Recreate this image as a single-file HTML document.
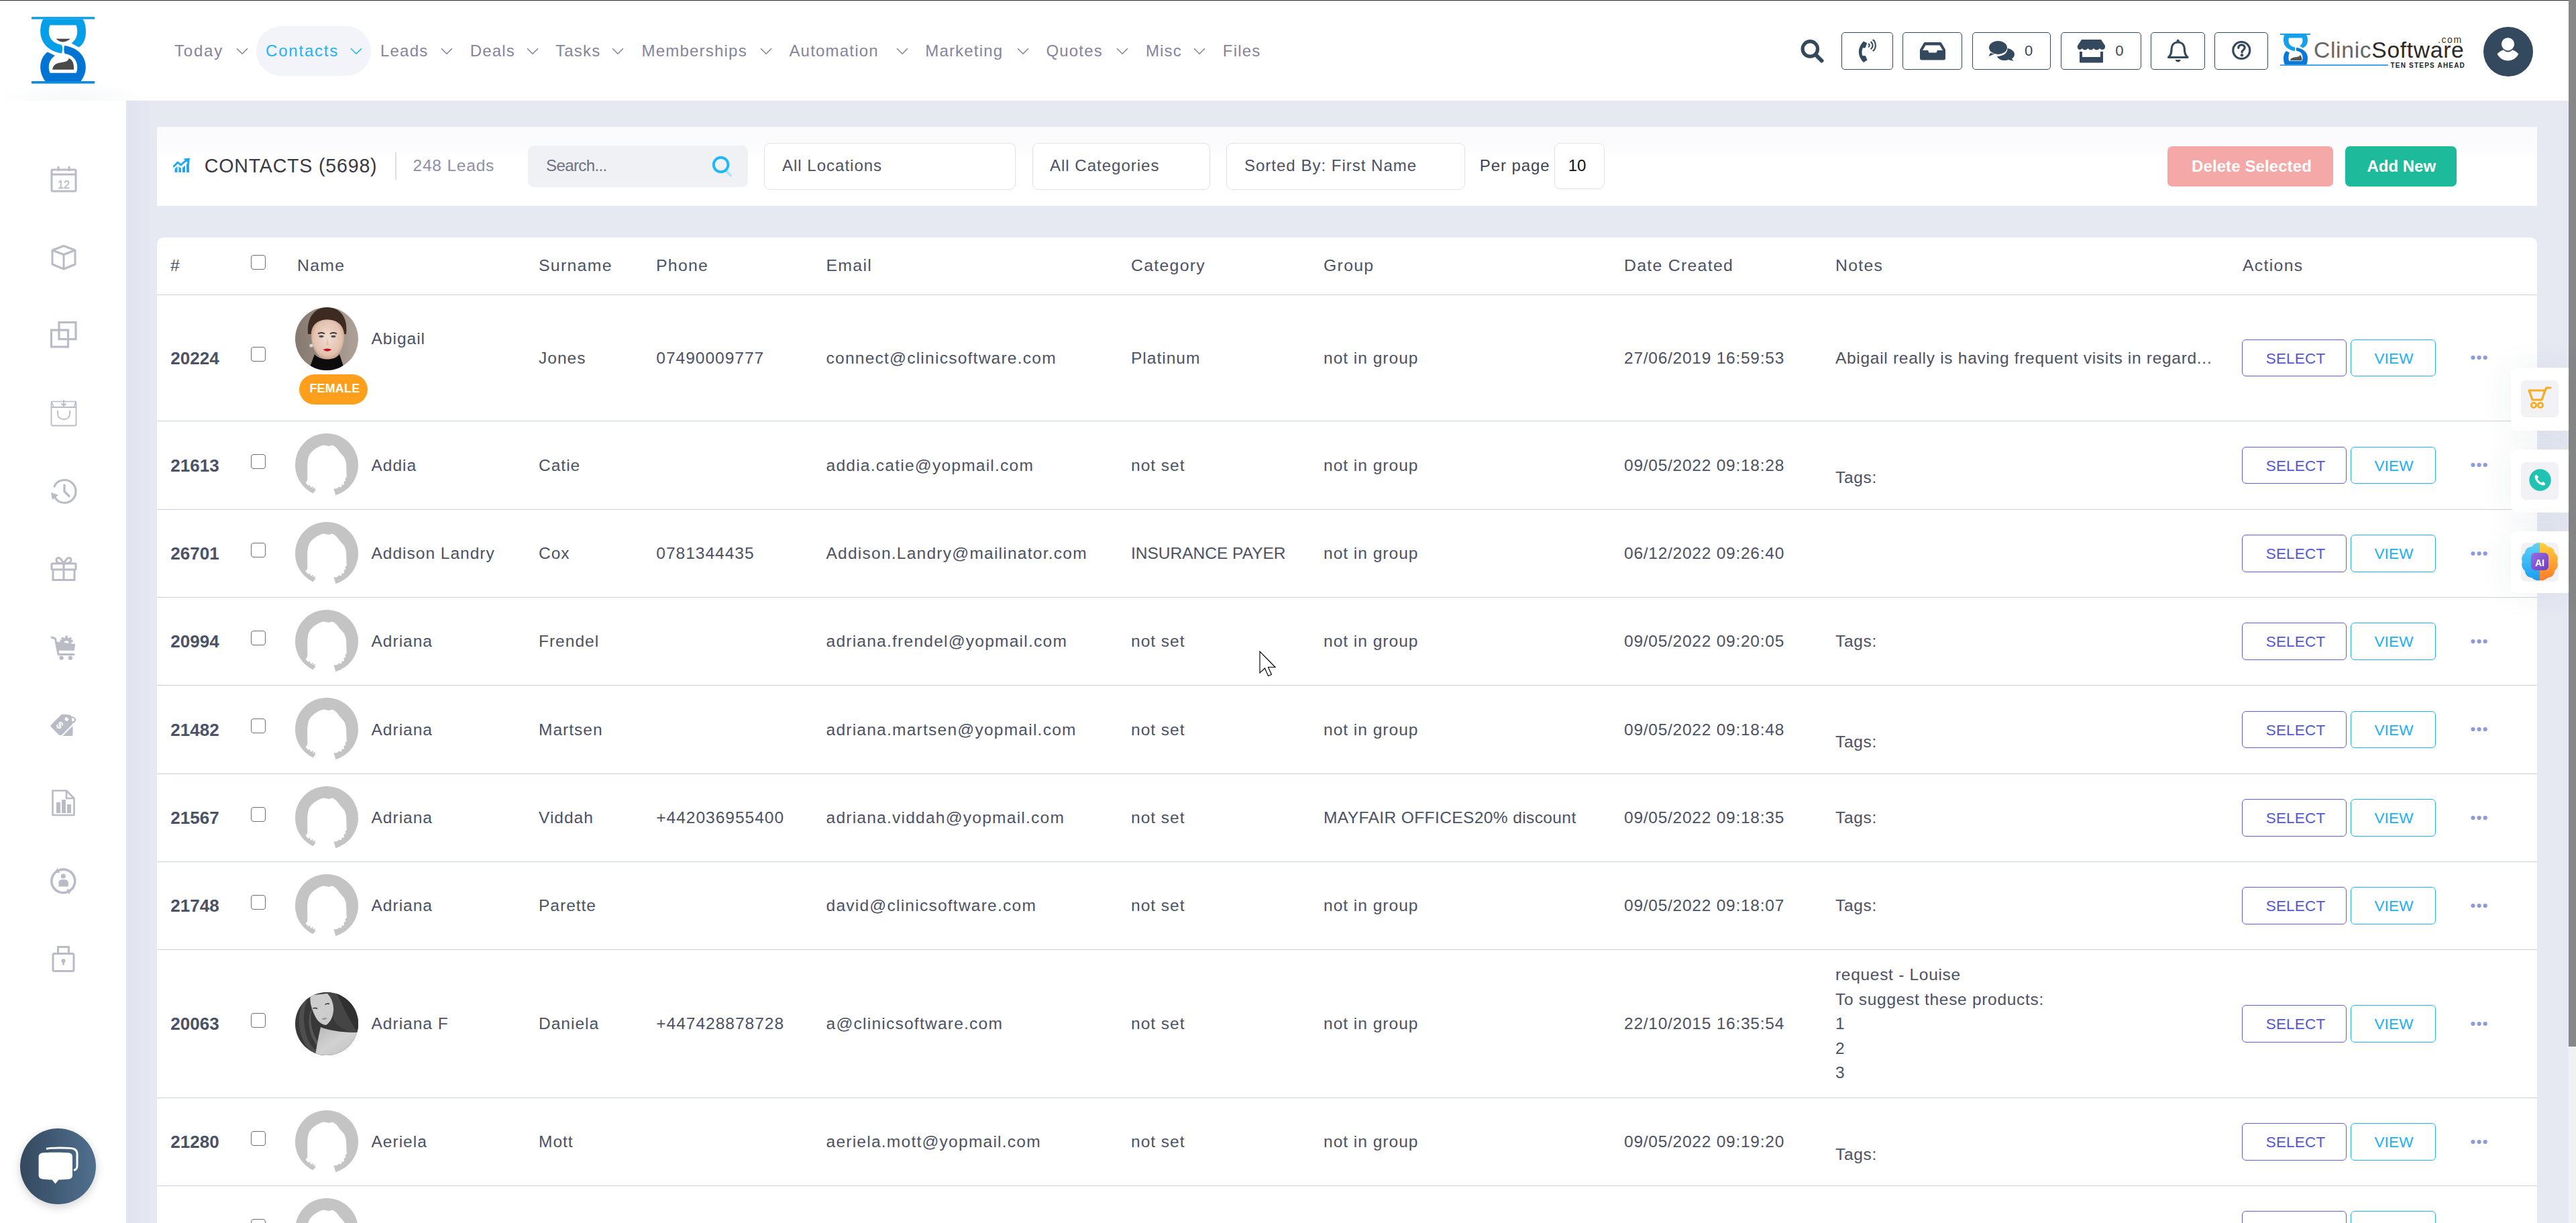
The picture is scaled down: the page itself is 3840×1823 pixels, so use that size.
<!DOCTYPE html><html><head><meta charset="utf-8"><title>Contacts</title><style>
html,body{margin:0;padding:0;width:3840px;height:1823px;overflow:hidden;} body{background:#fff;font-family:"Liberation Sans", sans-serif;} #root{position:relative;width:3840px;height:1823px;overflow:hidden;background:#fff;}
.t{position:absolute;line-height:1;white-space:nowrap;}
</style></head><body><div id="root">
<div style="position:absolute;left:188px;top:150px;width:3641px;height:1673px;background:#e6e9f2"></div>
<div style="position:absolute;left:188px;top:150px;width:40px;height:1673px;background:linear-gradient(90deg, rgba(200,204,220,0.18), rgba(200,204,220,0))"></div>
<div style="position:absolute;left:0px;top:118px;width:260px;height:32px;background:radial-gradient(ellipse 115px 32px at 110px 34px, rgba(238,240,244,0.55), rgba(255,255,255,0) 100%)"></div>
<div style="position:absolute;left:0px;top:0px;width:3829px;height:1px;background:#262a33"></div>
<svg style="position:absolute;left:40px;top:20px;" width="110" height="110" viewBox="0 0 110 110">
<rect x="7" y="5.2" width="94" height="3.4" fill="#079fe8"/>
<rect x="7" y="101" width="94" height="3.6" fill="#0b8ae0"/>
<path d="M24.5,8.5 L83.5,8.5 C86.5,13 88,20 88,27 C88,38 84.5,46 77.5,50.5 L66.5,44.5 C72.5,40 75.2,34 75.2,27 C75.2,23 74.5,20 73.5,17.5 L34.5,17.5 C33.5,20 32.8,23 32.8,27 C32.8,38 40,45 52,47 C53.5,51 53.5,55 52,59.5 C33,57 20.2,44 20.2,27 C20.2,20 21.5,13 24.5,8.5 Z" fill="#049fe8"/>
<path d="M56,48 C75,50.5 87.8,63 87.8,80 C87.8,88 85,95 80.5,101 L27.5,101 C23,95 20.2,88 20.2,80 C20.2,70 24.5,62 31,57.5 L42,63 C36,67 32.8,73 32.8,80 C32.8,84 33.6,86.5 34.6,88.7 L73.6,88.7 C74.6,86.5 75.2,84 75.2,80 C75.2,69 68,61.5 56.5,60 C55,56 55,52 56,48 Z" fill="#0074d2"/>
<path d="M43.6,37.8 L64.8,37.8 C61,41.5 56,42.5 54,42.5 C51,42.5 47,41.5 43.6,37.8 Z" fill="#4a4a4a"/>
<path d="M38.2,83.7 C39,76 45,74 52,73 C60,72 62,70 62.5,67 C68,68.5 70.2,74 70.2,83.7 Z" fill="#4a4a4a"/>
</svg>
<div style="position:absolute;left:382px;top:39px;width:171px;height:74px;background:#f3f4fa;border-radius:37px"></div>
<div class="t" style="left:260.0px;top:63.5px;font-size:24px;color:#85849f;font-weight:400;letter-spacing:1.8px;">Today</div>
<svg style="position:absolute;left:352.2px;top:71px;" width="18" height="11" viewBox="0 0 18 11"><path d="M1,1.2 L9,9.2 L17,1.2" fill="none" stroke="#85849f" stroke-width="1.6"/></svg>
<div class="t" style="left:396.0px;top:63.5px;font-size:24px;color:#1eb2fb;font-weight:400;letter-spacing:1.8px;">Contacts</div>
<svg style="position:absolute;left:522px;top:71px;" width="18" height="11" viewBox="0 0 18 11"><path d="M1,1.2 L9,9.2 L17,1.2" fill="none" stroke="#1eb2fb" stroke-width="1.6"/></svg>
<div class="t" style="left:567.0px;top:63.5px;font-size:24px;color:#85849f;font-weight:400;letter-spacing:1.2px;">Leads</div>
<svg style="position:absolute;left:656.7px;top:71px;" width="18" height="11" viewBox="0 0 18 11"><path d="M1,1.2 L9,9.2 L17,1.2" fill="none" stroke="#85849f" stroke-width="1.6"/></svg>
<div class="t" style="left:700.7px;top:63.5px;font-size:24px;color:#85849f;font-weight:400;letter-spacing:1.2px;">Deals</div>
<svg style="position:absolute;left:784.6px;top:71px;" width="18" height="11" viewBox="0 0 18 11"><path d="M1,1.2 L9,9.2 L17,1.2" fill="none" stroke="#85849f" stroke-width="1.6"/></svg>
<div class="t" style="left:828.0px;top:63.5px;font-size:24px;color:#85849f;font-weight:400;letter-spacing:1.2px;">Tasks</div>
<svg style="position:absolute;left:912px;top:71px;" width="18" height="11" viewBox="0 0 18 11"><path d="M1,1.2 L9,9.2 L17,1.2" fill="none" stroke="#85849f" stroke-width="1.6"/></svg>
<div class="t" style="left:956.6px;top:63.5px;font-size:24px;color:#85849f;font-weight:400;letter-spacing:1.2px;">Memberships</div>
<svg style="position:absolute;left:1132.9px;top:71px;" width="18" height="11" viewBox="0 0 18 11"><path d="M1,1.2 L9,9.2 L17,1.2" fill="none" stroke="#85849f" stroke-width="1.6"/></svg>
<div class="t" style="left:1176.4px;top:63.5px;font-size:24px;color:#85849f;font-weight:400;letter-spacing:1.2px;">Automation</div>
<svg style="position:absolute;left:1335.6px;top:71px;" width="18" height="11" viewBox="0 0 18 11"><path d="M1,1.2 L9,9.2 L17,1.2" fill="none" stroke="#85849f" stroke-width="1.6"/></svg>
<div class="t" style="left:1379.2px;top:63.5px;font-size:24px;color:#85849f;font-weight:400;letter-spacing:1.2px;">Marketing</div>
<svg style="position:absolute;left:1515.8px;top:71px;" width="18" height="11" viewBox="0 0 18 11"><path d="M1,1.2 L9,9.2 L17,1.2" fill="none" stroke="#85849f" stroke-width="1.6"/></svg>
<div class="t" style="left:1559.4px;top:63.5px;font-size:24px;color:#85849f;font-weight:400;letter-spacing:1.2px;">Quotes</div>
<svg style="position:absolute;left:1663.6px;top:71px;" width="18" height="11" viewBox="0 0 18 11"><path d="M1,1.2 L9,9.2 L17,1.2" fill="none" stroke="#85849f" stroke-width="1.6"/></svg>
<div class="t" style="left:1707.9px;top:63.5px;font-size:24px;color:#85849f;font-weight:400;letter-spacing:1.2px;">Misc</div>
<svg style="position:absolute;left:1779.2px;top:71px;" width="18" height="11" viewBox="0 0 18 11"><path d="M1,1.2 L9,9.2 L17,1.2" fill="none" stroke="#85849f" stroke-width="1.6"/></svg>
<div class="t" style="left:1822.8px;top:63.5px;font-size:24px;color:#85849f;font-weight:400;letter-spacing:1.2px;">Files</div>
<svg style="position:absolute;left:2682px;top:56px;" width="40" height="40" viewBox="0 0 40 40"><circle cx="16.3" cy="16.9" r="11.2" fill="none" stroke="#34495e" stroke-width="5.2"/><path d="M25,26 L33.5,34.5" stroke="#34495e" stroke-width="6" stroke-linecap="round"/></svg>
<div style="position:absolute;left:2745.3px;top:48px;width:76.4px;height:55.5px;box-sizing:border-box;border:1.6px solid #34495e;border-radius:5px"></div>
<div style="position:absolute;left:2836px;top:48px;width:88.7px;height:55.5px;box-sizing:border-box;border:1.6px solid #34495e;border-radius:5px"></div>
<div style="position:absolute;left:2940px;top:48px;width:116.6px;height:55.5px;box-sizing:border-box;border:1.6px solid #34495e;border-radius:5px"></div>
<div style="position:absolute;left:3072px;top:48px;width:119.6px;height:55.5px;box-sizing:border-box;border:1.6px solid #34495e;border-radius:5px"></div>
<div style="position:absolute;left:3206px;top:48px;width:80.6px;height:55.5px;box-sizing:border-box;border:1.6px solid #34495e;border-radius:5px"></div>
<div style="position:absolute;left:3301.3px;top:48px;width:79.4px;height:55.5px;box-sizing:border-box;border:1.6px solid #34495e;border-radius:5px"></div>
<svg style="position:absolute;left:2768px;top:58px;" width="32" height="36" viewBox="0 0 32 36"><path d="M10.1,3.5 L15.2,6.3 L12.6,13.5 L8.9,13.2 C7.2,17 7,21 8.3,24.9 L12.9,25.2 L15.5,31.5 L10.1,35 C5,30 2.9,24.5 2.9,19.2 C2.9,13.5 5.5,8 10.1,3.5 Z" fill="#34495e"/>
<path d="M17.6,7.6 C19.2,8.8 19.2,10.6 17.6,11.6" fill="none" stroke="#34495e" stroke-width="2.1" stroke-linecap="round"/>
<path d="M21.2,4.6 C24.4,7.2 24.4,12.4 21.2,14.6" fill="none" stroke="#34495e" stroke-width="2.1" stroke-linecap="round"/>
<path d="M24.4,1.6 C28.9,5.2 28.9,14.2 24.4,17.6" fill="none" stroke="#34495e" stroke-width="2.1" stroke-linecap="round"/></svg>
<svg style="position:absolute;left:2861px;top:62px;" width="40" height="28" viewBox="0 0 40 28"><path d="M9,1 L31,1 C32,1 33,1.5 33.5,2.5 L39,12 L39,25 C39,26.5 38,27.5 36.5,27.5 L3.5,27.5 C2,27.5 1,26.5 1,25 L1,12 L6.5,2.5 C7,1.5 8,1 9,1 Z M9.5,5.5 L5,13 L13,13 L14.5,16.5 L25.5,16.5 L27,13 L35,13 L30.5,5.5 Z" fill="#34495e" fill-rule="evenodd"/></svg>
<svg style="position:absolute;left:2964px;top:60px;" width="42" height="32" viewBox="0 0 42 32"><ellipse cx="14.5" cy="11" rx="13.5" ry="10" fill="#34495e"/><path d="M3,19 L0.5,24 L9,20.5 Z" fill="#34495e"/><path d="M28.5,12 C35,13 39,17 39,21 C39,23.5 37.5,26 35,27.5 L37.5,31 L30,29 C28,29.8 26,30 24,30 C19,30 15,28 13,24 C22,24 29,19 28.5,12 Z" fill="#34495e"/></svg>
<div class="t" style="left:3018.0px;top:64.9px;font-size:22px;color:#34495e;font-weight:400;letter-spacing:0px;">0</div>
<svg style="position:absolute;left:3096px;top:58px;" width="44" height="36" viewBox="0 0 44 36"><path d="M7,1 L36,1 L42,10 C42.5,13 41,16 38,16 C36,16 34.5,15 34,14 C33,15.5 31.5,16.5 29.5,16.5 C27.5,16.5 26,15.5 25,14 C24,15.5 22.5,16.5 21,16.5 C19,16.5 17.5,15.5 16.5,14 C15.5,15.5 14,16.5 12,16.5 C10,16.5 8.5,15.5 8,14 C7,15.5 5.5,16 4,16 C1.5,16 0.5,13 1,10 Z" fill="#34495e"/><path d="M4,19 L8,19 L8,27 L35,27 L35,19 L39,19 L39,34.5 C39,35 38.5,35.5 38,35.5 L5,35.5 C4.5,35.5 4,35 4,34.5 Z" fill="#34495e"/></svg>
<div class="t" style="left:3153.3px;top:64.9px;font-size:22px;color:#34495e;font-weight:400;letter-spacing:0px;">0</div>
<svg style="position:absolute;left:3230px;top:58px;" width="34" height="36" viewBox="0 0 34 36"><circle cx="16.7" cy="3" r="2.2" fill="#34495e"/><path d="M16.7,5 C10,5 7,10 7,16 C7,22 5.5,25 2.5,27.5 L31,27.5 C28,25 26.5,22 26.5,16 C26.5,10 23.5,5 16.7,5 Z" fill="none" stroke="#34495e" stroke-width="3.2" stroke-linejoin="round"/><path d="M12.5,31 L21,31 C20,33.5 18.5,34.5 16.7,34.5 C15,34.5 13.5,33.5 12.5,31 Z" fill="#34495e"/></svg>
<svg style="position:absolute;left:3326px;top:60px;" width="32" height="32" viewBox="0 0 32 32"><circle cx="15.3" cy="15" r="12.5" fill="none" stroke="#34495e" stroke-width="3.2"/><path d="M10.8,11.5 C10.8,8.5 13,6.8 15.5,6.8 C18.2,6.8 20.2,8.5 20.2,11 C20.2,14.5 16,14.5 16,18" fill="none" stroke="#34495e" stroke-width="3.2" stroke-linecap="round"/><circle cx="16" cy="22.3" r="2.2" fill="#34495e"/></svg>
<svg style="position:absolute;left:3399px;top:50px;" width="165" height="50" viewBox="0 0 165 50">
<rect x="0" y="0" width="45" height="2" fill="#1aa0ea"/>
<path d="M6,2 L39,2 C40.5,4 41,7 41,10 C41,16 38,19.5 34,21.5 L29,18.5 C32,17 33.5,14 33.5,10 C33.5,8.5 33.2,7.5 32.8,6.5 L13.2,6.5 C12.8,7.5 12.5,8.5 12.5,10 C12.5,16 16,19.5 22,20.5 C22.5,22.5 22.5,24 22,26 C12,25 5,19 5,10 C5,7 5.5,4 6,2 Z" fill="#14a1ea"/>
<path d="M24,21 C34,22 41,28 41,36 C41,40 40.5,44 39,46.5 L7,46.5 C5.5,44 5,40 5,36 C5,32 6.5,28.5 9,26 L14,28.5 C13,30 12.5,33 12.5,36 C12.5,38 12.8,39.5 13.2,40.8 L32.8,40.8 C33.2,39.5 33.5,38 33.5,36 C33.5,30 30,26.5 24.5,26 C23.8,24.5 23.8,22.5 24,21 Z" fill="#0a78d6"/>
<path d="M15,40 C15.5,36.5 19,35.5 24,35 C28,34.5 29,33.5 29.5,32 C31.5,33 32.5,36 32.5,40 Z" fill="#555"/>
<rect x="0" y="46.2" width="161" height="1.8" fill="#2e9be6"/>
</svg>
<div class="t" style="left:3448.5px;top:57.8px;font-size:33px;letter-spacing:0.65px;color:#666;font-weight:400;transform:scaleX(1.02);transform-origin:left">Clinic<span style="color:#2a2a2a">Software</span></div>
<div class="t" style="left:3634.0px;top:51.5px;font-size:14px;color:#333;font-weight:400;letter-spacing:1.6px;">.com</div>
<div class="t" style="left:3563.5px;top:92.7px;font-size:10px;color:#222;font-weight:700;letter-spacing:1.2px;">TEN STEPS AHEAD</div>
<svg style="position:absolute;left:3702px;top:39.5px;" width="74" height="74" viewBox="0 0 74 74"><circle cx="37" cy="37" r="37" fill="#34495e"/><circle cx="36.5" cy="25.8" r="9.6" fill="#fff"/><path d="M20.6,40.5 C24,36.5 29,34.5 30,34.5 C32,36.5 34,37.5 36.5,37.5 C39,37.5 41,36.5 43,34.5 C44,34.5 49,36.5 52.3,40.5 C49,47 43,50.5 36.5,50.5 C30,50.5 24,47 20.6,40.5 Z" fill="#fff"/></svg>
<div style="position:absolute;left:3829px;top:0px;width:11px;height:1823px;background:#f1f1f1"></div>
<div style="position:absolute;left:3829px;top:0px;width:11px;height:1560px;background:#878787"></div>
<svg style="position:absolute;left:75px;top:247px;overflow:visible" width="40" height="40" viewBox="0 0 40 40"><rect x="2" y="6" width="36" height="32" rx="1.5" fill="none" stroke="#b9bcc6" stroke-width="3"/><path d="M2,13 L38,13" stroke="#b9bcc6" stroke-width="3"/><path d="M12,1 L12,8 M28,1 L28,8" stroke="#b9bcc6" stroke-width="3"/><text x="20" y="33.5" font-family="Liberation Sans" font-size="16" fill="#b9bcc6" text-anchor="middle" font-weight="400" stroke="#b9bcc6" stroke-width="0.4">12</text></svg>
<svg style="position:absolute;left:75px;top:363.5px;overflow:visible" width="40" height="40" viewBox="0 0 40 40"><path d="M20,2.5 L37,9 L37,30 L20,37 L3,30 L3,9 Z M3,9 L20,15.5 L37,9 M20,15.5 L20,37" fill="none" stroke="#b9bcc6" stroke-width="3" stroke-linejoin="round"/></svg>
<svg style="position:absolute;left:75px;top:479px;overflow:visible" width="40" height="40" viewBox="0 0 40 40"><rect x="13" y="1.5" width="25" height="25" fill="none" stroke="#b9bcc6" stroke-width="3.2"/><rect x="1.5" y="13" width="25" height="25" fill="none" stroke="#b9bcc6" stroke-width="3.2"/></svg>
<svg style="position:absolute;left:75px;top:596px;overflow:visible" width="40" height="40" viewBox="0 0 40 40"><path d="M1.5,11 L38.5,11 L38.5,36.5 C38.5,37.5 37.5,38.5 36.5,38.5 L3.5,38.5 C2.5,38.5 1.5,37.5 1.5,36.5 Z" fill="none" stroke="#b9bcc6" stroke-width="1.8"/><path d="M1.5,2.5 L38.5,2.5 M1.5,2.5 L1.5,11 M38.5,2.5 L38.5,11 M2,3 L5,11 M38,3 L35,11" fill="none" stroke="#b9bcc6" stroke-width="1.6"/><path d="M20,0 L20,9 M16.5,5.5 L20,9 L23.5,5.5" fill="none" stroke="#b9bcc6" stroke-width="1.8"/><path d="M11,16 L11,21 C11,26 15,29 20,29 C25,29 29,26 29,21 L29,16" fill="none" stroke="#b9bcc6" stroke-width="1.8"/></svg>
<svg style="position:absolute;left:75px;top:712px;overflow:visible" width="40" height="40" viewBox="0 0 40 40"><path d="M6,27 C8.5,33.5 14,37.5 21,37.5 C30.5,37.5 38,30 38,20.5 C38,11 30.5,3.5 21,3.5 C14,3.5 8.5,7.5 6,13" fill="none" stroke="#b9bcc6" stroke-width="3.2" stroke-linecap="round"/><path d="M1,22 L12,26 L3,33 Z" fill="#b9bcc6"/><path d="M21,11 L21,20.5 L28,27.5" fill="none" stroke="#b9bcc6" stroke-width="3.2" stroke-linecap="round"/></svg>
<svg style="position:absolute;left:75px;top:828px;overflow:visible" width="40" height="40" viewBox="0 0 40 40"><rect x="2" y="12" width="36" height="9" rx="1" fill="none" stroke="#b9bcc6" stroke-width="3"/><path d="M4,21 L4,36.5 L36,36.5 L36,21 M20,12 L20,36.5" fill="none" stroke="#b9bcc6" stroke-width="3"/><path d="M20,12 C17,6 14,3 11.5,3.5 C8.5,4 8.5,8 10,9.5 C11,10.5 14,12 20,12 C26,12 29,10.5 30,9.5 C31.5,8 31.5,4 28.5,3.5 C26,3 23,6 20,12 Z" fill="none" stroke="#b9bcc6" stroke-width="3"/></svg>
<svg style="position:absolute;left:75px;top:944px;overflow:visible" width="40" height="40" viewBox="0 0 40 40"><path d="M24,13.5 L24,3.5 M24,13.5 L17,6.5 M24,13.5 L31,6.5 M24,13.5 L14.5,11 M24,13.5 L33.5,11" stroke="#b9bcc6" stroke-width="3.4"/><circle cx="24" cy="13.5" r="7.2" fill="#b9bcc6"/><circle cx="24" cy="14.5" r="3.6" fill="#fff"/><path d="M2,6 L7.5,8 L12,31.5 L35,31.5" fill="none" stroke="#b9bcc6" stroke-width="3" stroke-linecap="round" stroke-linejoin="round"/><path d="M9.3,12.5 L37.2,16.1 L35.7,25.7 L11.5,25.7 Z" fill="#b9bcc6"/><circle cx="16.6" cy="36.7" r="3.1" fill="#b9bcc6"/><circle cx="29.9" cy="36.7" r="3.1" fill="#b9bcc6"/></svg>
<svg style="position:absolute;left:75px;top:1061px;overflow:visible" width="40" height="40" viewBox="0 0 40 40"><path d="M1,19.5 L15.5,5 C16.5,4 17.5,3.8 19,3.8 L28,4.5 C30,4.7 31,5.5 31.5,7.5 L33,16 C33.3,17.5 33,18.5 32,19.5 L17,34.5 C15.8,35.6 14.2,35.6 13,34.5 L1,22.5 C0.2,21.7 0.2,20.3 1,19.5 Z" fill="#b9bcc6"/><path d="M18.5,36 L33.5,21 L33.5,34 C33.5,35.2 32.7,36 31.5,36 Z" fill="#b9bcc6"/><circle cx="24.5" cy="10.8" r="2.9" fill="#fff"/><path d="M25.5,9.5 C30.5,6 38.5,8.5 36.8,13.2 C35.8,16.2 31,16.8 27.5,14.8" fill="none" stroke="#b9bcc6" stroke-width="2.2"/><text x="14" y="26" font-family="Liberation Sans" font-size="15" fill="#fff" font-weight="700" text-anchor="middle" transform="rotate(45 15 20.5)">$</text></svg>
<svg style="position:absolute;left:75px;top:1177px;overflow:visible" width="40" height="40" viewBox="0 0 40 40"><path d="M3.5,1.5 L24,1.5 L35.5,13 L35.5,38 L3.5,38 Z" fill="none" stroke="#b9bcc6" stroke-width="2.6" stroke-linejoin="round"/><path d="M24,1.5 L24,13 L35.5,13" fill="none" stroke="#b9bcc6" stroke-width="2.6"/><rect x="9" y="19" width="6" height="16" fill="#b9bcc6"/><rect x="17" y="15" width="6" height="20" fill="#b9bcc6"/><rect x="25" y="22" width="6" height="13" fill="#b9bcc6"/></svg>
<svg style="position:absolute;left:75px;top:1293px;overflow:visible" width="40" height="40" viewBox="0 0 40 40"><path d="M29.2,34.5 A17.3,17.3 0 0 0 12,4.6" fill="none" stroke="#b9bcc6" stroke-width="3.6"/><path d="M9.4,6.1 A17.3,17.3 0 0 0 26.6,36" fill="none" stroke="#b9bcc6" stroke-width="3.6"/><path d="M6.8,7.2 L10.6,0.4 L14.2,8.6 Z M31.8,33.4 L28,40.2 L24.4,32 Z" fill="#b9bcc6"/><circle cx="19.3" cy="13" r="3.6" fill="#b9bcc6"/><path d="M12.4,28.5 L12.4,22 C12.4,19.5 14.5,17.9 19.3,17.9 C24.1,17.9 26.8,19.5 26.8,22 L26.8,28.5 Z" fill="#b9bcc6"/></svg>
<svg style="position:absolute;left:75px;top:1410px;overflow:visible" width="40" height="40" viewBox="0 0 40 40"><rect x="4" y="11.5" width="31" height="26" rx="2" fill="none" stroke="#b9bcc6" stroke-width="3"/><path d="M11.5,11.5 L11.5,1.5 L27.5,1.5 L27.5,11.5" fill="none" stroke="#b9bcc6" stroke-width="3"/><circle cx="19.5" cy="22.3" r="3" fill="#b9bcc6"/><rect x="18.2" y="23" width="2.6" height="5.5" fill="#b9bcc6"/></svg>
<div style="position:absolute;left:30px;top:1681.5px;width:113px;height:113px;border-radius:50%;background:linear-gradient(90deg,#34495e,#50708f);box-shadow:0 4px 14px rgba(0,0,0,0.18)"></div>
<svg style="position:absolute;left:50px;top:1700px;" width="70" height="70" viewBox="0 0 70 70"><path d="M19,12.5 C24,10.5 56,10.5 60,12.5 C63.5,14 65,16 65,20 L65,38 C65,41.5 63.5,43.5 60,44.5" fill="none" stroke="#fff" stroke-width="3"/><path d="M7.6,25 C7.6,21 9.5,19 13,18.5 C20,17.5 46,17.5 53,18.5 C56.5,19 58,21 58,25 L58,51 C58,55 56.5,57 53,57.5 C47,58.3 41,58.5 37.5,58.5 L32.5,64.6 L27.5,58.5 C24,58.5 18,58.3 13,57.5 C9.5,57 7.6,55 7.6,51 Z" fill="#fff"/></svg>
<div style="position:absolute;left:234px;top:189px;width:3548px;height:118px;background:linear-gradient(#fafafc 0,#fcfcfd 40px,#fff 41px)"></div>
<svg style="position:absolute;left:258px;top:235px;" width="26" height="23" viewBox="0 0 26 23"><path d="M1,13 L7,7 L11.5,11 L20,3.5" fill="none" stroke="#1fa8f0" stroke-width="3" stroke-linejoin="round" stroke-linecap="round"/><path d="M15.5,1.5 L25,0.5 L24,10 Z" fill="#1fa8f0"/><path d="M2.5,16.5 L6.5,13 L6.5,22 L2.5,22 Z M8.5,13 L12,16 L12,22 L8.5,22 Z M14,15 L18,11.5 L18,22 L14,22 Z M20,9.5 L24,6 L24,22 L20,22 Z" fill="#1fa8f0"/></svg>
<div class="t" style="left:304.7px;top:232.8px;font-size:28.6px;color:#393a46;font-weight:400;letter-spacing:0.8px;">CONTACTS (5698)</div>
<div style="position:absolute;left:589px;top:227px;width:2px;height:41px;background:#dcdfe8"></div>
<div class="t" style="left:615.5px;top:235.0px;font-size:24.5px;color:#8d90ab;font-weight:400;letter-spacing:0.8px;">248 Leads</div>
<div style="position:absolute;left:787px;top:217px;width:328px;height:62px;background:#eff1f5;border-radius:9px"></div>
<div class="t" style="left:814.0px;top:235.4px;font-size:24px;color:#6d7083;font-weight:400;letter-spacing:-0.6px;">Search...</div>
<svg style="position:absolute;left:1059px;top:232px;" width="34" height="34" viewBox="0 0 34 34"><path d="M22.5,21.5 L30,29.5" stroke="#b3e3f8" stroke-width="3.9" stroke-linecap="round"/><circle cx="15.6" cy="13.5" r="10.8" fill="none" stroke="#1fb8fd" stroke-width="3.9"/></svg>
<div style="position:absolute;left:1139px;top:213px;width:375px;height:69.5px;box-sizing:border-box;border:1.5px solid #dfe2ea;border-radius:9px;background:#fff"></div>
<div class="t" style="left:1166.0px;top:234.7px;font-size:24px;color:#4b5166;font-weight:400;letter-spacing:1.0px;">All Locations</div>
<div style="position:absolute;left:1539px;top:213px;width:265px;height:69.5px;box-sizing:border-box;border:1.5px solid #dfe2ea;border-radius:9px;background:#fff"></div>
<div class="t" style="left:1565.0px;top:234.7px;font-size:24px;color:#4b5166;font-weight:400;letter-spacing:1.0px;">All Categories</div>
<div style="position:absolute;left:1828px;top:213px;width:356px;height:69.5px;box-sizing:border-box;border:1.5px solid #dfe2ea;border-radius:9px;background:#fff"></div>
<div class="t" style="left:1855.0px;top:234.7px;font-size:24px;color:#4b5166;font-weight:400;letter-spacing:1.0px;">Sorted By: First Name</div>
<div class="t" style="left:2205.8px;top:234.7px;font-size:24px;color:#3f4257;font-weight:400;letter-spacing:0.9px;">Per page</div>
<div style="position:absolute;left:2317px;top:213px;width:75px;height:68.5px;box-sizing:border-box;border:1.5px solid #dfe2ea;border-radius:9px;background:#fff"></div>
<div class="t" style="left:2337.7px;top:234.7px;font-size:24px;color:#111;font-weight:400;letter-spacing:0px;">10</div>
<div style="position:absolute;left:3231px;top:218px;width:247px;height:60px;background:#f4a8a8;border-radius:7px"></div>
<div class="t" style="left:3267.0px;top:235.5px;font-size:24px;color:#fff;font-weight:700;letter-spacing:0.1px;">Delete Selected</div>
<div style="position:absolute;left:3496px;top:218px;width:166px;height:60px;background:#1dbb9b;border-radius:7px"></div>
<div class="t" style="left:3528.4px;top:235.5px;font-size:24px;color:#fff;font-weight:700;letter-spacing:0px;">Add New</div>
<div style="position:absolute;left:234px;top:354px;width:3548px;height:1489px;background:#fff;border-radius:10px 10px 0 0"></div>
<div class="t" style="left:254.0px;top:383.8px;font-size:24.8px;color:#4b5166;font-weight:400;letter-spacing:1.3px;">#</div>
<div class="t" style="left:443.0px;top:383.8px;font-size:24.8px;color:#4b5166;font-weight:400;letter-spacing:1.3px;">Name</div>
<div class="t" style="left:803.0px;top:383.8px;font-size:24.8px;color:#4b5166;font-weight:400;letter-spacing:1.3px;">Surname</div>
<div class="t" style="left:978.0px;top:383.8px;font-size:24.8px;color:#4b5166;font-weight:400;letter-spacing:1.3px;">Phone</div>
<div class="t" style="left:1231.5px;top:383.8px;font-size:24.8px;color:#4b5166;font-weight:400;letter-spacing:1.3px;">Email</div>
<div class="t" style="left:1686.0px;top:383.8px;font-size:24.8px;color:#4b5166;font-weight:400;letter-spacing:1.3px;">Category</div>
<div class="t" style="left:1973.0px;top:383.8px;font-size:24.8px;color:#4b5166;font-weight:400;letter-spacing:1.3px;">Group</div>
<div class="t" style="left:2421.0px;top:383.8px;font-size:24.8px;color:#4b5166;font-weight:400;letter-spacing:1.3px;">Date Created</div>
<div class="t" style="left:2736.0px;top:383.8px;font-size:24.8px;color:#4b5166;font-weight:400;letter-spacing:1.3px;">Notes</div>
<div class="t" style="left:3343.0px;top:383.8px;font-size:24.8px;color:#4b5166;font-weight:400;letter-spacing:1.3px;">Actions</div>
<div style="position:absolute;left:374.2px;top:380px;width:22px;height:22px;box-sizing:border-box;border:1.7px solid #6f6f6f;border-radius:4px;background:#fff"></div>
<div style="position:absolute;left:234px;top:439px;width:3548px;height:1.3px;background:#cdd0de"></div>
<div style="position:absolute;left:234px;top:627px;width:3548px;height:1.3px;background:#cdd0de"></div>
<div style="position:absolute;left:234px;top:759px;width:3548px;height:1.3px;background:#cdd0de"></div>
<div style="position:absolute;left:234px;top:890px;width:3548px;height:1.3px;background:#cdd0de"></div>
<div style="position:absolute;left:234px;top:1021px;width:3548px;height:1.3px;background:#cdd0de"></div>
<div style="position:absolute;left:234px;top:1153px;width:3548px;height:1.3px;background:#cdd0de"></div>
<div style="position:absolute;left:234px;top:1284px;width:3548px;height:1.3px;background:#cdd0de"></div>
<div style="position:absolute;left:234px;top:1415px;width:3548px;height:1.3px;background:#cdd0de"></div>
<div style="position:absolute;left:234px;top:1636px;width:3548px;height:1.3px;background:#cdd0de"></div>
<div style="position:absolute;left:234px;top:1767px;width:3548px;height:1.3px;background:#cdd0de"></div>
<div class="t" style="left:254.3px;top:520.5px;font-size:26px;color:#4b5166;font-weight:700;letter-spacing:0px;">20224</div>
<div style="position:absolute;left:374.2px;top:517.0px;width:22px;height:22px;box-sizing:border-box;border:1.7px solid #6f6f6f;border-radius:4px;background:#fff"></div>
<div style="position:absolute;left:440px;top:458px;width:94px;height:94px"><svg width="94" height="94" viewBox="0 0 94 94"><defs><clipPath id="cpa"><circle cx="47" cy="47" r="47"/></clipPath>
<linearGradient id="bga" x1="0" x2="1"><stop offset="0" stop-color="#85786f"/><stop offset="1" stop-color="#ada198"/></linearGradient>
<radialGradient id="skin" cx="0.5" cy="0.45" r="0.6"><stop offset="0" stop-color="#f2ddd2"/><stop offset="0.7" stop-color="#e3c2b0"/><stop offset="1" stop-color="#b88c78"/></radialGradient></defs>
<g clip-path="url(#cpa)"><rect width="94" height="94" fill="url(#bga)"/>
<path d="M19,40 C17,14 30,0 48,0 C66,0 79,14 76,40 L73,40 C71,28 63,19 48,18.5 C33,19 26,28 24,40 Z" fill="#3d2b22"/>
<path d="M24,42 C23.5,27 33,18.5 48,18.5 C63,18.5 73,27 73,42 C73,62 64,77 49,79 C34,77 24.5,62 24,42 Z" fill="url(#skin)"/>
<path d="M34,39.5 Q39,36.5 44,39.5 M52,39.5 Q57,36.5 62,39.5" stroke="#3a2a2a" stroke-width="1.8" fill="none"/>
<ellipse cx="39" cy="43.5" rx="3.5" ry="1.7" fill="#4a5060"/><ellipse cx="57" cy="43.5" rx="3.5" ry="1.7" fill="#4a5060"/>
<path d="M48,44 L46,56 L50,57 Z" fill="#d9b5a2" opacity="0.6"/>
<path d="M41.5,63 Q48,60 54.5,63 Q48,68.5 41.5,63 Z" fill="#c8101a"/>
<circle cx="24" cy="57" r="2.6" fill="#d8d8d8"/>
<path d="M29,70 C36,80 60,80 66,70 L74,94 L20,94 Z" fill="#0d0b0b"/></g></svg></div>
<div class="t" style="left:553.5px;top:493.3px;font-size:24.5px;color:#4b5166;font-weight:400;letter-spacing:1.0px;">Abigail</div>
<div style="position:absolute;left:446px;top:558px;width:102px;height:45px;background:#ff9f1c;border-radius:23px"></div>
<div class="t" style="left:461.4px;top:571.1px;font-size:17.8px;color:#fff;font-weight:700;letter-spacing:0.3px;">FEMALE</div>
<div class="t" style="left:803.0px;top:521.8px;font-size:24.5px;color:#4b5166;font-weight:400;letter-spacing:1.0px;">Jones</div>
<div class="t" style="left:978.3px;top:521.8px;font-size:24.5px;color:#4b5166;font-weight:400;letter-spacing:1.0px;">07490009777</div>
<div class="t" style="left:1231.5px;top:521.8px;font-size:24.5px;color:#4b5166;font-weight:400;letter-spacing:1.25px;">connect@clinicsoftware.com</div>
<div class="t" style="left:1686.0px;top:521.8px;font-size:24.5px;color:#4b5166;font-weight:400;letter-spacing:1.0px;">Platinum</div>
<div class="t" style="left:1973.0px;top:521.8px;font-size:24.5px;color:#4b5166;font-weight:400;letter-spacing:1.0px;">not in group</div>
<div class="t" style="left:2421.0px;top:521.8px;font-size:24.5px;color:#4b5166;font-weight:400;letter-spacing:0.75px;">27/06/2019 16:59:53</div>
<div class="t" style="left:2736.0px;top:521.8px;font-size:24.5px;color:#4b5166;font-weight:400;letter-spacing:0.7px;">Abigail really is having frequent visits in regard...</div>
<div style="position:absolute;left:3342px;top:505.5px;width:155.5px;height:55.5px;box-sizing:border-box;border:1.6px solid #5c62d6;border-radius:6px"></div>
<div class="t" style="left:3377.7px;top:523.5px;font-size:22.5px;color:#5158d8;font-weight:400;letter-spacing:0.2px;">SELECT</div>
<div style="position:absolute;left:3504px;top:505.5px;width:126.5px;height:55.5px;box-sizing:border-box;border:1.6px solid #1fb5f5;border-radius:6px"></div>
<div class="t" style="left:3539.4px;top:523.5px;font-size:22.5px;color:#1ab0f5;font-weight:400;letter-spacing:0.2px;">VIEW</div>
<svg style="position:absolute;left:3682px;top:529.0px;" width="26" height="8" viewBox="0 0 26 8"><circle cx="4.5" cy="4" r="3.1" fill="#8f9ad8"/><circle cx="13.6" cy="4" r="3.1" fill="#8f9ad8"/><circle cx="22.7" cy="4" r="3.1" fill="#8f9ad8"/></svg>
<div class="t" style="left:254.3px;top:680.5px;font-size:26px;color:#4b5166;font-weight:700;letter-spacing:0px;">21613</div>
<div style="position:absolute;left:374.2px;top:677.0px;width:22px;height:22px;box-sizing:border-box;border:1.7px solid #6f6f6f;border-radius:4px;background:#fff"></div>
<div style="position:absolute;left:440px;top:646.0px;width:94px;height:94px"><svg width="94" height="94" viewBox="0 0 94 94"><circle cx="47" cy="47" r="47" fill="#c4c4c4"/>
<path d="M27,88.5 L31.5,83.5 L29,84.5 L30,80.5 L26.5,82.5 L26.5,78.5 L23,81 L22,76.5 L19.5,78 L15.5,73.5 L18.3,70 L18.3,62 C18.3,55 18,50 18.3,45 C19,38 20,34 21,32.5 C25,26 32,20 42.5,17.5 L50.8,19 L55,17.5 C60,19 64,24 66.6,28.3 C70,32 74,36 74.5,39 C76,43 76.2,46 76.2,49 L76.6,62 L77,65 L74.5,67 L75.5,70.5 L72.5,72 L73,76.5 L69.5,76.5 L69,80.5 L65,79.5 L63,82 L57.5,82.5 L60,90.5 L60,100 L27,100 Z" fill="#fff"/></svg></div>
<div class="t" style="left:553.5px;top:681.8px;font-size:24.5px;color:#4b5166;font-weight:400;letter-spacing:1.0px;">Addia</div>
<div class="t" style="left:803.0px;top:681.8px;font-size:24.5px;color:#4b5166;font-weight:400;letter-spacing:1.0px;">Catie</div>
<div class="t" style="left:978.3px;top:681.8px;font-size:24.5px;color:#4b5166;font-weight:400;letter-spacing:1.0px;"></div>
<div class="t" style="left:1231.5px;top:681.8px;font-size:24.5px;color:#4b5166;font-weight:400;letter-spacing:1.25px;">addia.catie@yopmail.com</div>
<div class="t" style="left:1686.0px;top:681.8px;font-size:24.5px;color:#4b5166;font-weight:400;letter-spacing:1.0px;">not set</div>
<div class="t" style="left:1973.0px;top:681.8px;font-size:24.5px;color:#4b5166;font-weight:400;letter-spacing:1.0px;">not in group</div>
<div class="t" style="left:2421.0px;top:681.8px;font-size:24.5px;color:#4b5166;font-weight:400;letter-spacing:0.75px;">09/05/2022 09:18:28</div>
<div class="t" style="left:2736.0px;top:700.0px;font-size:24.5px;color:#4b5166;font-weight:400;letter-spacing:0.7px;">Tags:</div>
<div style="position:absolute;left:3342px;top:665.5px;width:155.5px;height:55.5px;box-sizing:border-box;border:1.6px solid #5c62d6;border-radius:6px"></div>
<div class="t" style="left:3377.7px;top:683.5px;font-size:22.5px;color:#5158d8;font-weight:400;letter-spacing:0.2px;">SELECT</div>
<div style="position:absolute;left:3504px;top:665.5px;width:126.5px;height:55.5px;box-sizing:border-box;border:1.6px solid #1fb5f5;border-radius:6px"></div>
<div class="t" style="left:3539.4px;top:683.5px;font-size:22.5px;color:#1ab0f5;font-weight:400;letter-spacing:0.2px;">VIEW</div>
<svg style="position:absolute;left:3682px;top:689.0px;" width="26" height="8" viewBox="0 0 26 8"><circle cx="4.5" cy="4" r="3.1" fill="#8f9ad8"/><circle cx="13.6" cy="4" r="3.1" fill="#8f9ad8"/><circle cx="22.7" cy="4" r="3.1" fill="#8f9ad8"/></svg>
<div class="t" style="left:254.3px;top:812.0px;font-size:26px;color:#4b5166;font-weight:700;letter-spacing:0px;">26701</div>
<div style="position:absolute;left:374.2px;top:808.5px;width:22px;height:22px;box-sizing:border-box;border:1.7px solid #6f6f6f;border-radius:4px;background:#fff"></div>
<div style="position:absolute;left:440px;top:777.5px;width:94px;height:94px"><svg width="94" height="94" viewBox="0 0 94 94"><circle cx="47" cy="47" r="47" fill="#c4c4c4"/>
<path d="M27,88.5 L31.5,83.5 L29,84.5 L30,80.5 L26.5,82.5 L26.5,78.5 L23,81 L22,76.5 L19.5,78 L15.5,73.5 L18.3,70 L18.3,62 C18.3,55 18,50 18.3,45 C19,38 20,34 21,32.5 C25,26 32,20 42.5,17.5 L50.8,19 L55,17.5 C60,19 64,24 66.6,28.3 C70,32 74,36 74.5,39 C76,43 76.2,46 76.2,49 L76.6,62 L77,65 L74.5,67 L75.5,70.5 L72.5,72 L73,76.5 L69.5,76.5 L69,80.5 L65,79.5 L63,82 L57.5,82.5 L60,90.5 L60,100 L27,100 Z" fill="#fff"/></svg></div>
<div class="t" style="left:553.5px;top:813.3px;font-size:24.5px;color:#4b5166;font-weight:400;letter-spacing:1.0px;">Addison Landry</div>
<div class="t" style="left:803.0px;top:813.3px;font-size:24.5px;color:#4b5166;font-weight:400;letter-spacing:1.0px;">Cox</div>
<div class="t" style="left:978.3px;top:813.3px;font-size:24.5px;color:#4b5166;font-weight:400;letter-spacing:1.0px;">0781344435</div>
<div class="t" style="left:1231.5px;top:813.3px;font-size:24.5px;color:#4b5166;font-weight:400;letter-spacing:1.25px;">Addison.Landry@mailinator.com</div>
<div class="t" style="left:1686.0px;top:813.3px;font-size:24.5px;color:#4b5166;font-weight:400;letter-spacing:0.0px;">INSURANCE PAYER</div>
<div class="t" style="left:1973.0px;top:813.3px;font-size:24.5px;color:#4b5166;font-weight:400;letter-spacing:1.0px;">not in group</div>
<div class="t" style="left:2421.0px;top:813.3px;font-size:24.5px;color:#4b5166;font-weight:400;letter-spacing:0.75px;">06/12/2022 09:26:40</div>
<div style="position:absolute;left:3342px;top:797.0px;width:155.5px;height:55.5px;box-sizing:border-box;border:1.6px solid #5c62d6;border-radius:6px"></div>
<div class="t" style="left:3377.7px;top:815.0px;font-size:22.5px;color:#5158d8;font-weight:400;letter-spacing:0.2px;">SELECT</div>
<div style="position:absolute;left:3504px;top:797.0px;width:126.5px;height:55.5px;box-sizing:border-box;border:1.6px solid #1fb5f5;border-radius:6px"></div>
<div class="t" style="left:3539.4px;top:815.0px;font-size:22.5px;color:#1ab0f5;font-weight:400;letter-spacing:0.2px;">VIEW</div>
<svg style="position:absolute;left:3682px;top:820.5px;" width="26" height="8" viewBox="0 0 26 8"><circle cx="4.5" cy="4" r="3.1" fill="#8f9ad8"/><circle cx="13.6" cy="4" r="3.1" fill="#8f9ad8"/><circle cx="22.7" cy="4" r="3.1" fill="#8f9ad8"/></svg>
<div class="t" style="left:254.3px;top:943.0px;font-size:26px;color:#4b5166;font-weight:700;letter-spacing:0px;">20994</div>
<div style="position:absolute;left:374.2px;top:939.5px;width:22px;height:22px;box-sizing:border-box;border:1.7px solid #6f6f6f;border-radius:4px;background:#fff"></div>
<div style="position:absolute;left:440px;top:908.5px;width:94px;height:94px"><svg width="94" height="94" viewBox="0 0 94 94"><circle cx="47" cy="47" r="47" fill="#c4c4c4"/>
<path d="M27,88.5 L31.5,83.5 L29,84.5 L30,80.5 L26.5,82.5 L26.5,78.5 L23,81 L22,76.5 L19.5,78 L15.5,73.5 L18.3,70 L18.3,62 C18.3,55 18,50 18.3,45 C19,38 20,34 21,32.5 C25,26 32,20 42.5,17.5 L50.8,19 L55,17.5 C60,19 64,24 66.6,28.3 C70,32 74,36 74.5,39 C76,43 76.2,46 76.2,49 L76.6,62 L77,65 L74.5,67 L75.5,70.5 L72.5,72 L73,76.5 L69.5,76.5 L69,80.5 L65,79.5 L63,82 L57.5,82.5 L60,90.5 L60,100 L27,100 Z" fill="#fff"/></svg></div>
<div class="t" style="left:553.5px;top:944.3px;font-size:24.5px;color:#4b5166;font-weight:400;letter-spacing:1.0px;">Adriana</div>
<div class="t" style="left:803.0px;top:944.3px;font-size:24.5px;color:#4b5166;font-weight:400;letter-spacing:1.0px;">Frendel</div>
<div class="t" style="left:978.3px;top:944.3px;font-size:24.5px;color:#4b5166;font-weight:400;letter-spacing:1.0px;"></div>
<div class="t" style="left:1231.5px;top:944.3px;font-size:24.5px;color:#4b5166;font-weight:400;letter-spacing:1.25px;">adriana.frendel@yopmail.com</div>
<div class="t" style="left:1686.0px;top:944.3px;font-size:24.5px;color:#4b5166;font-weight:400;letter-spacing:1.0px;">not set</div>
<div class="t" style="left:1973.0px;top:944.3px;font-size:24.5px;color:#4b5166;font-weight:400;letter-spacing:1.0px;">not in group</div>
<div class="t" style="left:2421.0px;top:944.3px;font-size:24.5px;color:#4b5166;font-weight:400;letter-spacing:0.75px;">09/05/2022 09:20:05</div>
<div class="t" style="left:2736.0px;top:944.3px;font-size:24.5px;color:#4b5166;font-weight:400;letter-spacing:0.7px;">Tags:</div>
<div style="position:absolute;left:3342px;top:928.0px;width:155.5px;height:55.5px;box-sizing:border-box;border:1.6px solid #5c62d6;border-radius:6px"></div>
<div class="t" style="left:3377.7px;top:946.0px;font-size:22.5px;color:#5158d8;font-weight:400;letter-spacing:0.2px;">SELECT</div>
<div style="position:absolute;left:3504px;top:928.0px;width:126.5px;height:55.5px;box-sizing:border-box;border:1.6px solid #1fb5f5;border-radius:6px"></div>
<div class="t" style="left:3539.4px;top:946.0px;font-size:22.5px;color:#1ab0f5;font-weight:400;letter-spacing:0.2px;">VIEW</div>
<svg style="position:absolute;left:3682px;top:951.5px;" width="26" height="8" viewBox="0 0 26 8"><circle cx="4.5" cy="4" r="3.1" fill="#8f9ad8"/><circle cx="13.6" cy="4" r="3.1" fill="#8f9ad8"/><circle cx="22.7" cy="4" r="3.1" fill="#8f9ad8"/></svg>
<div class="t" style="left:254.3px;top:1074.5px;font-size:26px;color:#4b5166;font-weight:700;letter-spacing:0px;">21482</div>
<div style="position:absolute;left:374.2px;top:1071.0px;width:22px;height:22px;box-sizing:border-box;border:1.7px solid #6f6f6f;border-radius:4px;background:#fff"></div>
<div style="position:absolute;left:440px;top:1040.0px;width:94px;height:94px"><svg width="94" height="94" viewBox="0 0 94 94"><circle cx="47" cy="47" r="47" fill="#c4c4c4"/>
<path d="M27,88.5 L31.5,83.5 L29,84.5 L30,80.5 L26.5,82.5 L26.5,78.5 L23,81 L22,76.5 L19.5,78 L15.5,73.5 L18.3,70 L18.3,62 C18.3,55 18,50 18.3,45 C19,38 20,34 21,32.5 C25,26 32,20 42.5,17.5 L50.8,19 L55,17.5 C60,19 64,24 66.6,28.3 C70,32 74,36 74.5,39 C76,43 76.2,46 76.2,49 L76.6,62 L77,65 L74.5,67 L75.5,70.5 L72.5,72 L73,76.5 L69.5,76.5 L69,80.5 L65,79.5 L63,82 L57.5,82.5 L60,90.5 L60,100 L27,100 Z" fill="#fff"/></svg></div>
<div class="t" style="left:553.5px;top:1075.8px;font-size:24.5px;color:#4b5166;font-weight:400;letter-spacing:1.0px;">Adriana</div>
<div class="t" style="left:803.0px;top:1075.8px;font-size:24.5px;color:#4b5166;font-weight:400;letter-spacing:1.0px;">Martsen</div>
<div class="t" style="left:978.3px;top:1075.8px;font-size:24.5px;color:#4b5166;font-weight:400;letter-spacing:1.0px;"></div>
<div class="t" style="left:1231.5px;top:1075.8px;font-size:24.5px;color:#4b5166;font-weight:400;letter-spacing:1.25px;">adriana.martsen@yopmail.com</div>
<div class="t" style="left:1686.0px;top:1075.8px;font-size:24.5px;color:#4b5166;font-weight:400;letter-spacing:1.0px;">not set</div>
<div class="t" style="left:1973.0px;top:1075.8px;font-size:24.5px;color:#4b5166;font-weight:400;letter-spacing:1.0px;">not in group</div>
<div class="t" style="left:2421.0px;top:1075.8px;font-size:24.5px;color:#4b5166;font-weight:400;letter-spacing:0.75px;">09/05/2022 09:18:48</div>
<div class="t" style="left:2736.0px;top:1094.0px;font-size:24.5px;color:#4b5166;font-weight:400;letter-spacing:0.7px;">Tags:</div>
<div style="position:absolute;left:3342px;top:1059.5px;width:155.5px;height:55.5px;box-sizing:border-box;border:1.6px solid #5c62d6;border-radius:6px"></div>
<div class="t" style="left:3377.7px;top:1077.5px;font-size:22.5px;color:#5158d8;font-weight:400;letter-spacing:0.2px;">SELECT</div>
<div style="position:absolute;left:3504px;top:1059.5px;width:126.5px;height:55.5px;box-sizing:border-box;border:1.6px solid #1fb5f5;border-radius:6px"></div>
<div class="t" style="left:3539.4px;top:1077.5px;font-size:22.5px;color:#1ab0f5;font-weight:400;letter-spacing:0.2px;">VIEW</div>
<svg style="position:absolute;left:3682px;top:1083.0px;" width="26" height="8" viewBox="0 0 26 8"><circle cx="4.5" cy="4" r="3.1" fill="#8f9ad8"/><circle cx="13.6" cy="4" r="3.1" fill="#8f9ad8"/><circle cx="22.7" cy="4" r="3.1" fill="#8f9ad8"/></svg>
<div class="t" style="left:254.3px;top:1206.0px;font-size:26px;color:#4b5166;font-weight:700;letter-spacing:0px;">21567</div>
<div style="position:absolute;left:374.2px;top:1202.5px;width:22px;height:22px;box-sizing:border-box;border:1.7px solid #6f6f6f;border-radius:4px;background:#fff"></div>
<div style="position:absolute;left:440px;top:1171.5px;width:94px;height:94px"><svg width="94" height="94" viewBox="0 0 94 94"><circle cx="47" cy="47" r="47" fill="#c4c4c4"/>
<path d="M27,88.5 L31.5,83.5 L29,84.5 L30,80.5 L26.5,82.5 L26.5,78.5 L23,81 L22,76.5 L19.5,78 L15.5,73.5 L18.3,70 L18.3,62 C18.3,55 18,50 18.3,45 C19,38 20,34 21,32.5 C25,26 32,20 42.5,17.5 L50.8,19 L55,17.5 C60,19 64,24 66.6,28.3 C70,32 74,36 74.5,39 C76,43 76.2,46 76.2,49 L76.6,62 L77,65 L74.5,67 L75.5,70.5 L72.5,72 L73,76.5 L69.5,76.5 L69,80.5 L65,79.5 L63,82 L57.5,82.5 L60,90.5 L60,100 L27,100 Z" fill="#fff"/></svg></div>
<div class="t" style="left:553.5px;top:1207.3px;font-size:24.5px;color:#4b5166;font-weight:400;letter-spacing:1.0px;">Adriana</div>
<div class="t" style="left:803.0px;top:1207.3px;font-size:24.5px;color:#4b5166;font-weight:400;letter-spacing:1.0px;">Viddah</div>
<div class="t" style="left:978.3px;top:1207.3px;font-size:24.5px;color:#4b5166;font-weight:400;letter-spacing:1.0px;">+442036955400</div>
<div class="t" style="left:1231.5px;top:1207.3px;font-size:24.5px;color:#4b5166;font-weight:400;letter-spacing:1.25px;">adriana.viddah@yopmail.com</div>
<div class="t" style="left:1686.0px;top:1207.3px;font-size:24.5px;color:#4b5166;font-weight:400;letter-spacing:1.0px;">not set</div>
<div class="t" style="left:1973.0px;top:1207.3px;font-size:24.5px;color:#4b5166;font-weight:400;letter-spacing:0.4px;">MAYFAIR OFFICES20% discount</div>
<div class="t" style="left:2421.0px;top:1207.3px;font-size:24.5px;color:#4b5166;font-weight:400;letter-spacing:0.75px;">09/05/2022 09:18:35</div>
<div class="t" style="left:2736.0px;top:1207.3px;font-size:24.5px;color:#4b5166;font-weight:400;letter-spacing:0.7px;">Tags:</div>
<div style="position:absolute;left:3342px;top:1191.0px;width:155.5px;height:55.5px;box-sizing:border-box;border:1.6px solid #5c62d6;border-radius:6px"></div>
<div class="t" style="left:3377.7px;top:1209.0px;font-size:22.5px;color:#5158d8;font-weight:400;letter-spacing:0.2px;">SELECT</div>
<div style="position:absolute;left:3504px;top:1191.0px;width:126.5px;height:55.5px;box-sizing:border-box;border:1.6px solid #1fb5f5;border-radius:6px"></div>
<div class="t" style="left:3539.4px;top:1209.0px;font-size:22.5px;color:#1ab0f5;font-weight:400;letter-spacing:0.2px;">VIEW</div>
<svg style="position:absolute;left:3682px;top:1214.5px;" width="26" height="8" viewBox="0 0 26 8"><circle cx="4.5" cy="4" r="3.1" fill="#8f9ad8"/><circle cx="13.6" cy="4" r="3.1" fill="#8f9ad8"/><circle cx="22.7" cy="4" r="3.1" fill="#8f9ad8"/></svg>
<div class="t" style="left:254.3px;top:1337.0px;font-size:26px;color:#4b5166;font-weight:700;letter-spacing:0px;">21748</div>
<div style="position:absolute;left:374.2px;top:1333.5px;width:22px;height:22px;box-sizing:border-box;border:1.7px solid #6f6f6f;border-radius:4px;background:#fff"></div>
<div style="position:absolute;left:440px;top:1302.5px;width:94px;height:94px"><svg width="94" height="94" viewBox="0 0 94 94"><circle cx="47" cy="47" r="47" fill="#c4c4c4"/>
<path d="M27,88.5 L31.5,83.5 L29,84.5 L30,80.5 L26.5,82.5 L26.5,78.5 L23,81 L22,76.5 L19.5,78 L15.5,73.5 L18.3,70 L18.3,62 C18.3,55 18,50 18.3,45 C19,38 20,34 21,32.5 C25,26 32,20 42.5,17.5 L50.8,19 L55,17.5 C60,19 64,24 66.6,28.3 C70,32 74,36 74.5,39 C76,43 76.2,46 76.2,49 L76.6,62 L77,65 L74.5,67 L75.5,70.5 L72.5,72 L73,76.5 L69.5,76.5 L69,80.5 L65,79.5 L63,82 L57.5,82.5 L60,90.5 L60,100 L27,100 Z" fill="#fff"/></svg></div>
<div class="t" style="left:553.5px;top:1338.3px;font-size:24.5px;color:#4b5166;font-weight:400;letter-spacing:1.0px;">Adriana</div>
<div class="t" style="left:803.0px;top:1338.3px;font-size:24.5px;color:#4b5166;font-weight:400;letter-spacing:1.0px;">Parette</div>
<div class="t" style="left:978.3px;top:1338.3px;font-size:24.5px;color:#4b5166;font-weight:400;letter-spacing:1.0px;"></div>
<div class="t" style="left:1231.5px;top:1338.3px;font-size:24.5px;color:#4b5166;font-weight:400;letter-spacing:1.25px;">david@clinicsoftware.com</div>
<div class="t" style="left:1686.0px;top:1338.3px;font-size:24.5px;color:#4b5166;font-weight:400;letter-spacing:1.0px;">not set</div>
<div class="t" style="left:1973.0px;top:1338.3px;font-size:24.5px;color:#4b5166;font-weight:400;letter-spacing:1.0px;">not in group</div>
<div class="t" style="left:2421.0px;top:1338.3px;font-size:24.5px;color:#4b5166;font-weight:400;letter-spacing:0.75px;">09/05/2022 09:18:07</div>
<div class="t" style="left:2736.0px;top:1338.3px;font-size:24.5px;color:#4b5166;font-weight:400;letter-spacing:0.7px;">Tags:</div>
<div style="position:absolute;left:3342px;top:1322.0px;width:155.5px;height:55.5px;box-sizing:border-box;border:1.6px solid #5c62d6;border-radius:6px"></div>
<div class="t" style="left:3377.7px;top:1340.0px;font-size:22.5px;color:#5158d8;font-weight:400;letter-spacing:0.2px;">SELECT</div>
<div style="position:absolute;left:3504px;top:1322.0px;width:126.5px;height:55.5px;box-sizing:border-box;border:1.6px solid #1fb5f5;border-radius:6px"></div>
<div class="t" style="left:3539.4px;top:1340.0px;font-size:22.5px;color:#1ab0f5;font-weight:400;letter-spacing:0.2px;">VIEW</div>
<svg style="position:absolute;left:3682px;top:1345.5px;" width="26" height="8" viewBox="0 0 26 8"><circle cx="4.5" cy="4" r="3.1" fill="#8f9ad8"/><circle cx="13.6" cy="4" r="3.1" fill="#8f9ad8"/><circle cx="22.7" cy="4" r="3.1" fill="#8f9ad8"/></svg>
<div class="t" style="left:254.3px;top:1513.0px;font-size:26px;color:#4b5166;font-weight:700;letter-spacing:0px;">20063</div>
<div style="position:absolute;left:374.2px;top:1509.5px;width:22px;height:22px;box-sizing:border-box;border:1.7px solid #6f6f6f;border-radius:4px;background:#fff"></div>
<div style="position:absolute;left:440px;top:1478.5px;width:94px;height:94px"><svg width="94" height="94" viewBox="0 0 94 94"><defs><clipPath id="cpf"><circle cx="47" cy="47" r="47"/></clipPath>
<linearGradient id="chf" x1="0" x2="1" y1="0" y2="1"><stop offset="0" stop-color="#b8b8b8"/><stop offset="0.5" stop-color="#d2d2d2"/><stop offset="1" stop-color="#bdbdbd"/></linearGradient></defs>
<g clip-path="url(#cpf)"><rect width="94" height="94" fill="#383838"/>
<path d="M40,0 L94,0 L94,62 C80,60 66,54 58,42 C54,30 52,15 40,0 Z" fill="#454545"/>
<path d="M60,0 C70,15 76,35 92,58 L94,58 L94,0 Z" fill="#303030"/>
<path d="M22,3 C12,20 10,45 18,68 C24,82 32,90 42,94 L28,94 C14,82 4,60 6,36 C8,20 14,10 22,3 Z" fill="#4e4e4e"/>
<path d="M26,20 C20,40 24,62 38,80 L34,82 C20,64 16,40 26,20 Z" fill="#6a6a6a" opacity="0.6"/>
<path d="M38,52 C50,57 70,60 92,60 L94,94 L30,94 C32,80 35,65 38,52 Z" fill="url(#chf)"/>
<path d="M23,4.5 C21,15 25,25 28,32 C32,42 38,48 46,49 C52,45 56,38 57,28 C58,18 54,8 48,2 Z" fill="#cdcdcd"/>
<path d="M26.5,24.5 Q29.5,22.5 33,24.5 M44.5,18.5 Q47.5,16 51,17.5" stroke="#2e2e2e" stroke-width="1.5" fill="none"/>
<path d="M39,40 Q44,37.5 48,38.5 Q44,42 39,40 Z" fill="#8a8a8a"/></g></svg></div>
<div class="t" style="left:553.5px;top:1514.3px;font-size:24.5px;color:#4b5166;font-weight:400;letter-spacing:1.0px;">Adriana F</div>
<div class="t" style="left:803.0px;top:1514.3px;font-size:24.5px;color:#4b5166;font-weight:400;letter-spacing:1.0px;">Daniela</div>
<div class="t" style="left:978.3px;top:1514.3px;font-size:24.5px;color:#4b5166;font-weight:400;letter-spacing:1.0px;">+447428878728</div>
<div class="t" style="left:1231.5px;top:1514.3px;font-size:24.5px;color:#4b5166;font-weight:400;letter-spacing:1.25px;">a@clinicsoftware.com</div>
<div class="t" style="left:1686.0px;top:1514.3px;font-size:24.5px;color:#4b5166;font-weight:400;letter-spacing:1.0px;">not set</div>
<div class="t" style="left:1973.0px;top:1514.3px;font-size:24.5px;color:#4b5166;font-weight:400;letter-spacing:1.0px;">not in group</div>
<div class="t" style="left:2421.0px;top:1514.3px;font-size:24.5px;color:#4b5166;font-weight:400;letter-spacing:0.75px;">22/10/2015 16:35:54</div>
<div class="t" style="left:2736.0px;top:1441.3px;font-size:24.5px;color:#4b5166;font-weight:400;letter-spacing:0.7px;">request - Louise</div>
<div class="t" style="left:2736.0px;top:1477.8px;font-size:24.5px;color:#4b5166;font-weight:400;letter-spacing:0.7px;">To suggest these products:</div>
<div class="t" style="left:2736.0px;top:1514.3px;font-size:24.5px;color:#4b5166;font-weight:400;letter-spacing:0.7px;">1</div>
<div class="t" style="left:2736.0px;top:1550.8px;font-size:24.5px;color:#4b5166;font-weight:400;letter-spacing:0.7px;">2</div>
<div class="t" style="left:2736.0px;top:1587.3px;font-size:24.5px;color:#4b5166;font-weight:400;letter-spacing:0.7px;">3</div>
<div style="position:absolute;left:3342px;top:1498.0px;width:155.5px;height:55.5px;box-sizing:border-box;border:1.6px solid #5c62d6;border-radius:6px"></div>
<div class="t" style="left:3377.7px;top:1516.0px;font-size:22.5px;color:#5158d8;font-weight:400;letter-spacing:0.2px;">SELECT</div>
<div style="position:absolute;left:3504px;top:1498.0px;width:126.5px;height:55.5px;box-sizing:border-box;border:1.6px solid #1fb5f5;border-radius:6px"></div>
<div class="t" style="left:3539.4px;top:1516.0px;font-size:22.5px;color:#1ab0f5;font-weight:400;letter-spacing:0.2px;">VIEW</div>
<svg style="position:absolute;left:3682px;top:1521.5px;" width="26" height="8" viewBox="0 0 26 8"><circle cx="4.5" cy="4" r="3.1" fill="#8f9ad8"/><circle cx="13.6" cy="4" r="3.1" fill="#8f9ad8"/><circle cx="22.7" cy="4" r="3.1" fill="#8f9ad8"/></svg>
<div class="t" style="left:254.3px;top:1689.0px;font-size:26px;color:#4b5166;font-weight:700;letter-spacing:0px;">21280</div>
<div style="position:absolute;left:374.2px;top:1685.5px;width:22px;height:22px;box-sizing:border-box;border:1.7px solid #6f6f6f;border-radius:4px;background:#fff"></div>
<div style="position:absolute;left:440px;top:1654.5px;width:94px;height:94px"><svg width="94" height="94" viewBox="0 0 94 94"><circle cx="47" cy="47" r="47" fill="#c4c4c4"/>
<path d="M27,88.5 L31.5,83.5 L29,84.5 L30,80.5 L26.5,82.5 L26.5,78.5 L23,81 L22,76.5 L19.5,78 L15.5,73.5 L18.3,70 L18.3,62 C18.3,55 18,50 18.3,45 C19,38 20,34 21,32.5 C25,26 32,20 42.5,17.5 L50.8,19 L55,17.5 C60,19 64,24 66.6,28.3 C70,32 74,36 74.5,39 C76,43 76.2,46 76.2,49 L76.6,62 L77,65 L74.5,67 L75.5,70.5 L72.5,72 L73,76.5 L69.5,76.5 L69,80.5 L65,79.5 L63,82 L57.5,82.5 L60,90.5 L60,100 L27,100 Z" fill="#fff"/></svg></div>
<div class="t" style="left:553.5px;top:1690.3px;font-size:24.5px;color:#4b5166;font-weight:400;letter-spacing:1.0px;">Aeriela</div>
<div class="t" style="left:803.0px;top:1690.3px;font-size:24.5px;color:#4b5166;font-weight:400;letter-spacing:1.0px;">Mott</div>
<div class="t" style="left:978.3px;top:1690.3px;font-size:24.5px;color:#4b5166;font-weight:400;letter-spacing:1.0px;"></div>
<div class="t" style="left:1231.5px;top:1690.3px;font-size:24.5px;color:#4b5166;font-weight:400;letter-spacing:1.25px;">aeriela.mott@yopmail.com</div>
<div class="t" style="left:1686.0px;top:1690.3px;font-size:24.5px;color:#4b5166;font-weight:400;letter-spacing:1.0px;">not set</div>
<div class="t" style="left:1973.0px;top:1690.3px;font-size:24.5px;color:#4b5166;font-weight:400;letter-spacing:1.0px;">not in group</div>
<div class="t" style="left:2421.0px;top:1690.3px;font-size:24.5px;color:#4b5166;font-weight:400;letter-spacing:0.75px;">09/05/2022 09:19:20</div>
<div class="t" style="left:2736.0px;top:1708.5px;font-size:24.5px;color:#4b5166;font-weight:400;letter-spacing:0.7px;">Tags:</div>
<div style="position:absolute;left:3342px;top:1674.0px;width:155.5px;height:55.5px;box-sizing:border-box;border:1.6px solid #5c62d6;border-radius:6px"></div>
<div class="t" style="left:3377.7px;top:1692.0px;font-size:22.5px;color:#5158d8;font-weight:400;letter-spacing:0.2px;">SELECT</div>
<div style="position:absolute;left:3504px;top:1674.0px;width:126.5px;height:55.5px;box-sizing:border-box;border:1.6px solid #1fb5f5;border-radius:6px"></div>
<div class="t" style="left:3539.4px;top:1692.0px;font-size:22.5px;color:#1ab0f5;font-weight:400;letter-spacing:0.2px;">VIEW</div>
<svg style="position:absolute;left:3682px;top:1697.5px;" width="26" height="8" viewBox="0 0 26 8"><circle cx="4.5" cy="4" r="3.1" fill="#8f9ad8"/><circle cx="13.6" cy="4" r="3.1" fill="#8f9ad8"/><circle cx="22.7" cy="4" r="3.1" fill="#8f9ad8"/></svg>
<div class="t" style="left:254.3px;top:1820.0px;font-size:26px;color:#4b5166;font-weight:700;letter-spacing:0px;"></div>
<div style="position:absolute;left:374.2px;top:1816.5px;width:22px;height:22px;box-sizing:border-box;border:1.7px solid #6f6f6f;border-radius:4px;background:#fff"></div>
<div style="position:absolute;left:440px;top:1785.5px;width:94px;height:94px"><svg width="94" height="94" viewBox="0 0 94 94"><circle cx="47" cy="47" r="47" fill="#c4c4c4"/>
<path d="M27,88.5 L31.5,83.5 L29,84.5 L30,80.5 L26.5,82.5 L26.5,78.5 L23,81 L22,76.5 L19.5,78 L15.5,73.5 L18.3,70 L18.3,62 C18.3,55 18,50 18.3,45 C19,38 20,34 21,32.5 C25,26 32,20 42.5,17.5 L50.8,19 L55,17.5 C60,19 64,24 66.6,28.3 C70,32 74,36 74.5,39 C76,43 76.2,46 76.2,49 L76.6,62 L77,65 L74.5,67 L75.5,70.5 L72.5,72 L73,76.5 L69.5,76.5 L69,80.5 L65,79.5 L63,82 L57.5,82.5 L60,90.5 L60,100 L27,100 Z" fill="#fff"/></svg></div>
<div class="t" style="left:553.5px;top:1821.3px;font-size:24.5px;color:#4b5166;font-weight:400;letter-spacing:1.0px;"></div>
<div class="t" style="left:803.0px;top:1821.3px;font-size:24.5px;color:#4b5166;font-weight:400;letter-spacing:1.0px;"></div>
<div class="t" style="left:978.3px;top:1821.3px;font-size:24.5px;color:#4b5166;font-weight:400;letter-spacing:1.0px;"></div>
<div class="t" style="left:1231.5px;top:1821.3px;font-size:24.5px;color:#4b5166;font-weight:400;letter-spacing:1.25px;"></div>
<div class="t" style="left:1686.0px;top:1821.3px;font-size:24.5px;color:#4b5166;font-weight:400;letter-spacing:1.0px;"></div>
<div class="t" style="left:1973.0px;top:1821.3px;font-size:24.5px;color:#4b5166;font-weight:400;letter-spacing:1.0px;"></div>
<div class="t" style="left:2421.0px;top:1821.3px;font-size:24.5px;color:#4b5166;font-weight:400;letter-spacing:0.75px;">09/05/2022 09:18:50</div>
<div style="position:absolute;left:3342px;top:1805.0px;width:155.5px;height:55.5px;box-sizing:border-box;border:1.6px solid #5c62d6;border-radius:6px"></div>
<div class="t" style="left:3377.7px;top:1823.0px;font-size:22.5px;color:#5158d8;font-weight:400;letter-spacing:0.2px;">SELECT</div>
<div style="position:absolute;left:3504px;top:1805.0px;width:126.5px;height:55.5px;box-sizing:border-box;border:1.6px solid #1fb5f5;border-radius:6px"></div>
<div class="t" style="left:3539.4px;top:1823.0px;font-size:22.5px;color:#1ab0f5;font-weight:400;letter-spacing:0.2px;">VIEW</div>
<svg style="position:absolute;left:3682px;top:1828.5px;" width="26" height="8" viewBox="0 0 26 8"><circle cx="4.5" cy="4" r="3.1" fill="#8f9ad8"/><circle cx="13.6" cy="4" r="3.1" fill="#8f9ad8"/><circle cx="22.7" cy="4" r="3.1" fill="#8f9ad8"/></svg>
<div style="position:absolute;left:3743px;top:548px;width:86px;height:93.5px;background:#fff;border-radius:9px 0 0 9px;box-shadow:0 0 50px rgba(40,50,90,0.07)"></div>
<div style="position:absolute;left:3758px;top:567px;width:56px;height:55px;background:#f1f1f6;border-radius:7px"></div>
<svg style="position:absolute;left:3768px;top:576px;" width="36" height="34" viewBox="0 0 36 34"><path d="M2,6 L26,6 L21,20 L7,20 Z" fill="none" stroke="#f9ac1f" stroke-width="3.2" stroke-linejoin="round"/><path d="M25,8 L28,2 L34,2" fill="none" stroke="#f9ac1f" stroke-width="3.2" stroke-linecap="round"/><circle cx="9" cy="28" r="3.6" fill="none" stroke="#f9ac1f" stroke-width="2.8"/><circle cx="19" cy="28" r="3.6" fill="none" stroke="#f9ac1f" stroke-width="2.8"/></svg>
<div style="position:absolute;left:3743px;top:669.5px;width:86px;height:94.0px;background:#fff;border-radius:9px 0 0 9px;box-shadow:0 0 50px rgba(40,50,90,0.07)"></div>
<div style="position:absolute;left:3758px;top:688.5px;width:56px;height:56.0px;background:#f1f1f6;border-radius:7px"></div>
<svg style="position:absolute;left:3769.5px;top:699px;" width="33" height="33" viewBox="0 0 33 33"><circle cx="16.5" cy="16.5" r="16.2" fill="#1ec4b1"/><path d="M10.5,8.5 C9.5,9 8.5,10 8.5,12 C9,17.5 15,24 21,24.5 C23,24.5 24,23.5 24.5,22.5 L22,19.5 C21.5,19 20.5,19 20,19.5 L18.5,20.5 C16,19.5 13.5,17 12.5,14.5 L13.5,13 C14,12.5 14,11.5 13.5,11 Z" fill="#fff"/></svg>
<div style="position:absolute;left:3743px;top:791.5px;width:86px;height:92.5px;background:#fff;border-radius:9px 0 0 9px;box-shadow:0 0 50px rgba(40,50,90,0.07)"></div>
<div style="position:absolute;left:3758px;top:809px;width:56px;height:57.5px;background:#f1f1f6;border-radius:7px"></div>
<svg style="position:absolute;left:3756px;top:807px;" width="60" height="60" viewBox="0 0 60 60"><defs><linearGradient id="ail" x1="0" x2="0" y1="0" y2="1"><stop offset="0" stop-color="#5fd3f7"/><stop offset="1" stop-color="#1b9cf2"/></linearGradient><linearGradient id="air" x1="0" x2="0" y1="0" y2="1"><stop offset="0" stop-color="#ffd23a"/><stop offset="1" stop-color="#ff7b2c"/></linearGradient><linearGradient id="aic" x1="0" x2="1" y1="0" y2="1"><stop offset="0" stop-color="#9a6ce0"/><stop offset="1" stop-color="#6b3fc4"/></linearGradient></defs><path d="M30,2 C24,2 20,5 18,8 C12,8 8,12 8,17 C4,20 2,25 4,30 C2,35 4,41 8,44 C8,50 13,54 18,54 C21,57 25,59 30,58 Z" fill="url(#ail)"/><path d="M30,2 C36,2 40,5 42,8 C48,8 52,12 52,17 C56,20 58,25 56,30 C58,35 56,41 52,44 C52,50 47,54 42,54 C39,57 35,59 30,58 Z" fill="url(#air)"/><rect x="17" y="17" width="26" height="26" rx="6" fill="url(#aic)"/><text x="30" y="36.5" font-family="Liberation Sans" font-size="14" font-weight="700" fill="#fff" text-anchor="middle">AI</text></svg>
<svg style="position:absolute;left:1877px;top:970px;" width="28" height="42" viewBox="0 0 28 42"><path d="M1,1 L1,33 L8.5,26 L13.5,37.5 L18.5,35.5 L13.5,24.5 L24,24.5 Z" fill="#fff" stroke="#000" stroke-width="1.15" stroke-linejoin="miter"/></svg>
</div></body></html>
